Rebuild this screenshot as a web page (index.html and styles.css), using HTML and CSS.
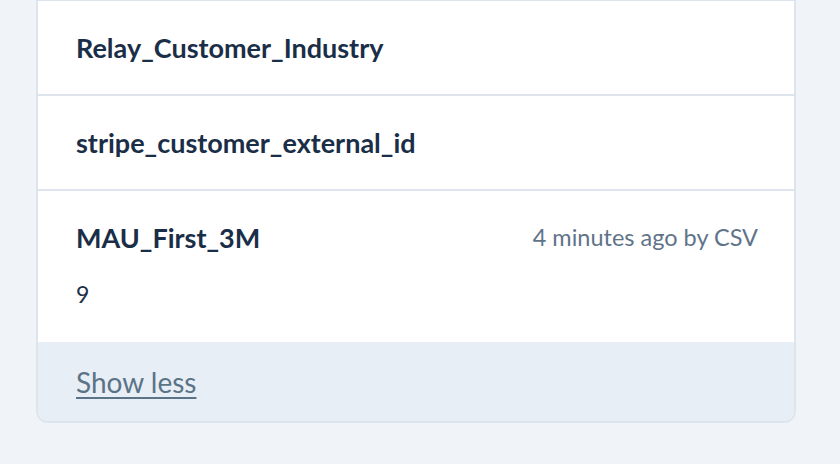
FILE: index.html
```html
<!DOCTYPE html>
<html lang="en">
<head>
    <meta charset="UTF-8">
    <meta name="viewport" content="width=device-width, initial-scale=1.0">
    <title>Custom attributes</title>
    <link rel="stylesheet" href="styles.css">
</head>

<body>
    <div class="card">
        <div class="attr">
            <div class="attr-head">
                <span class="attr-name">Relay_Customer_Industry</span>
            </div>
        </div>

        <div class="attr">
            <div class="attr-head">
                <span class="attr-name">stripe_customer_external_id</span>
            </div>
        </div>

        <div class="attr attr-filled">
            <div class="attr-head">
                <span class="attr-name">MAU_First_3M</span>
                <span class="attr-meta">4 minutes ago by CSV</span>
            </div>
            <div class="attr-value">9</div>
        </div>

        <div class="card-footer">
            <a href="#" class="toggle">Show less</a>
        </div>
    </div>
</body>
</html>
```

FILE: styles.css
```css
body {
    font-family: Lato, "Noto Sans", sans-serif;
    background-color: #f0f4f9;
    color: #1b2e47;
    margin: 0;
    padding: 0;
    min-height: 100vh;
}

.card {
    width: 760px;
    margin: -1px 0 0 36px;
    box-sizing: border-box;
    background-color: #fff;
    border: 2px solid #dde4ee;
    border-radius: 0 0 12px 12px;
    overflow: hidden;
}

.attr {
    padding: 30px 36px 30px 38px;
    border-bottom: 2px solid #dde4ee;
}

.attr-head {
    display: flex;
    justify-content: space-between;
    align-items: center;
    height: 33px;
}

.attr-name {
    font-size: 27px;
    font-weight: 700;
    line-height: 33px;
}

.attr-meta {
    font-size: 23.5px;
    line-height: 33px;
    color: #5f7489;
}

.attr-filled {
    padding-bottom: 31px;
    border-bottom: none;
}

.attr-value {
    margin-top: 24px;
    font-size: 23px;
    line-height: 33px;
}

.card-footer {
    background-color: #e8eef5;
    padding: 24px 36px 22px 38px;
    font-size: 28px;
    line-height: 33px;
}

.toggle {
    color: #5b7387;
    text-decoration: underline;
    text-underline-offset: 4px;
}
```
